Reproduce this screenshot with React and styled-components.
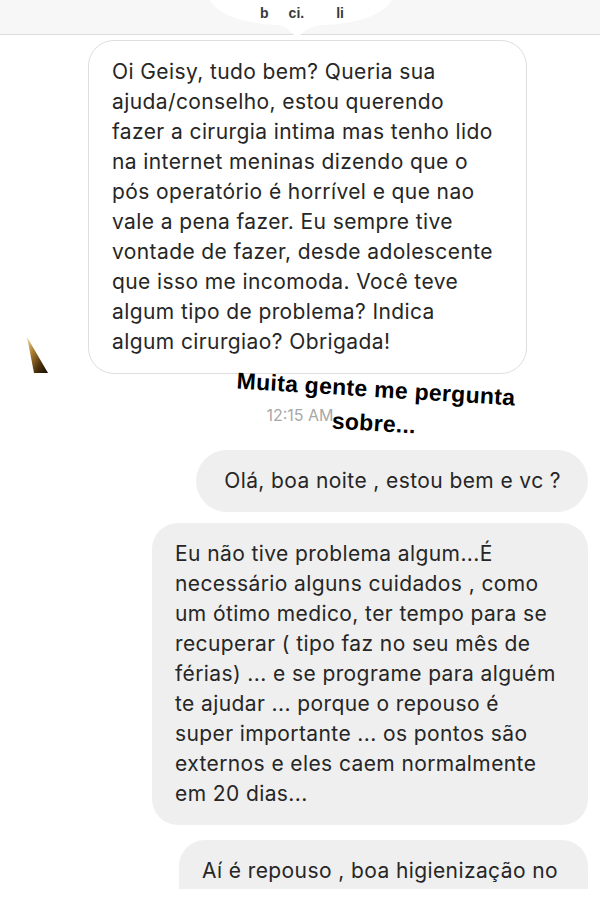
import styled, { createGlobalStyle } from 'styled-components'

const GlobalStyle = createGlobalStyle`
  html, body { margin: 0; padding: 0; background: #fff; }
  body { font-family: Inter, "Liberation Sans", Arial, sans-serif; color: #262626; }
`

const messages = [
  {
    id: 'm1',
    side: 'in',
    width: 439,
    lines: [
      'Oi Geisy, tudo bem? Queria sua',
      'ajuda/conselho, estou querendo',
      'fazer a cirurgia intima mas tenho lido',
      'na internet meninas dizendo que o',
      'pós operatório é horrível e que nao',
      'vale a pena fazer. Eu sempre tive',
      'vontade de fazer, desde adolescente',
      'que isso me incomoda. Você teve',
      'algum tipo de problema? Indica',
      'algum cirurgiao? Obrigada!'
    ]
  },
  { id: 'time', time: '12:15 AM' },
  {
    id: 'm2',
    side: 'out',
    gap: 0,
    lines: ['Olá, boa noite , estou bem e vc ?']
  },
  {
    id: 'm3',
    side: 'out',
    width: 436,
    gap: 11,
    lines: [
      'Eu não tive problema algum...É',
      'necessário alguns cuidados , como',
      'um ótimo medico, ter tempo para se',
      'recuperar ( tipo faz no seu mês de',
      'férias) ... e se programe para alguém',
      'te ajudar ... porque o repouso é',
      'super importante ... os pontos são',
      'externos e eles caem normalmente',
      'em 20 dias...'
    ]
  },
  {
    id: 'm4',
    side: 'out',
    width: 409,
    gap: 15,
    lines: [
      'Aí é repouso , boa higienização no',
      'local, muita água e alimentação saudável'
    ]
  }
]

export default function App() {
  return (
    <>
      <GlobalStyle />
      <Screen>
        <Viewport>
          <Header>
            <Blob viewBox="0 0 200 42" aria-hidden="true">
              <path d="M10 0 C 16 14, 44 24, 80 25 C 88 28, 94 33, 97 40 C 100 33, 108 27, 122 25 C 158 24, 184 14, 192 0 Z" fill="#ffffff" />
            </Blob>
            <Name>
              <span>b</span>
              <span>ci.</span>
              <span>li</span>
            </Name>
          </Header>

          <Thread>
            {messages.map((m) =>
              m.time ? (
                <Timestamp key={m.id}>{m.time}</Timestamp>
              ) : (
                <Bubble
                  key={m.id}
                  $side={m.side}
                  $width={m.width}
                  $gap={m.gap}
                  $single={m.lines.length === 1}
                >
                  {m.lines.map((line, i) => (
                    <Line key={i}>{line}</Line>
                  ))}
                </Bubble>
              )
            )}
          </Thread>
        </Viewport>

        <StoryText>
          Muita gente me pergunta
          <br />
          sobre...
        </StoryText>

        <Shard viewBox="0 0 26 42" aria-hidden="true">
          <defs>
            <linearGradient id="shard" x1="0" y1="0" x2="1" y2="1">
              <stop offset="0" stopColor="#f0d9a0" />
              <stop offset="0.35" stopColor="#a87a30" />
              <stop offset="0.7" stopColor="#4a2f0c" />
              <stop offset="1" stopColor="#120c05" />
            </linearGradient>
          </defs>
          <polygon points="2,2 9,38 23,38" fill="url(#shard)" />
        </Shard>
      </Screen>
    </>
  )
}

const Screen = styled.div`
  position: relative;
  width: 600px;
  height: 900px;
  overflow: hidden;
  background: #fff;
`
const Viewport = styled.div`
  height: 889px;
  overflow: hidden;
  display: flex;
  flex-direction: column;
`
const Header = styled.header`
  position: relative;
  flex: none;
  height: 34px;
  background: #f7f7f7;
  border-bottom: 1px solid #dcdcdc;
  display: flex;
  justify-content: center;
  align-items: flex-start;
`
const Blob = styled.svg`
  position: absolute;
  left: 200px;
  top: 0;
  width: 200px;
  height: 42px;
`
const Name = styled.div`
  position: relative;
  display: flex;
  gap: 20px;
  padding: 4px 0 0 4px;
  font-family: "Liberation Sans", Arial, sans-serif;
  font-size: 14px;
  font-weight: 700;
  line-height: 18px;
  color: #3a3a3a;
  span:last-child { margin-left: 12px; }
`
const Thread = styled.div`
  display: flex;
  flex-direction: column;
  padding: 5px 12px 0 0;
`
const Bubble = styled.div`
  box-sizing: border-box;
  flex: none;
  align-self: ${(p) => (p.$side === 'in' ? 'flex-start' : 'flex-end')};
  width: ${(p) => (p.$width ? `${p.$width}px` : 'auto')};
  margin-left: ${(p) => (p.$side === 'in' ? '88px' : '0')};
  margin-top: ${(p) => p.$gap ?? 0}px;
  padding: ${(p) => (p.$single ? '16px 27px 16px 28px' : '16px 16px 16px 23px')};
  border-radius: ${(p) => (p.$single ? '31px' : '26px')};
  background: ${(p) => (p.$side === 'in' ? '#ffffff' : '#efefef')};
  border: ${(p) => (p.$side === 'in' ? '1px solid #dedede' : 'none')};
  font-size: 21px;
  letter-spacing: 0.4px;
  line-height: 30px;
  color: #262626;
  &:first-child { padding-left: 23px; }
`
const Line = styled.div`
  white-space: nowrap;
`
const Timestamp = styled.div`
  align-self: center;
  margin: 31px 0 25px 12px;
  font-size: 16px;
  line-height: 20px;
  color: #a8a8a8;
`
const StoryText = styled.div`
  position: absolute;
  left: 375px;
  top: 406px;
  transform: translate(-50%, -50%) rotate(3.5deg);
  white-space: nowrap;
  text-align: center;
  font-family: "Liberation Sans", Arial, sans-serif;
  font-weight: 700;
  font-size: 23px;
  letter-spacing: 0.3px;
  line-height: 34px;
  color: #000;
`
const Shard = styled.svg`
  position: absolute;
  left: 25px;
  top: 335px;
  width: 26px;
  height: 42px;
`
